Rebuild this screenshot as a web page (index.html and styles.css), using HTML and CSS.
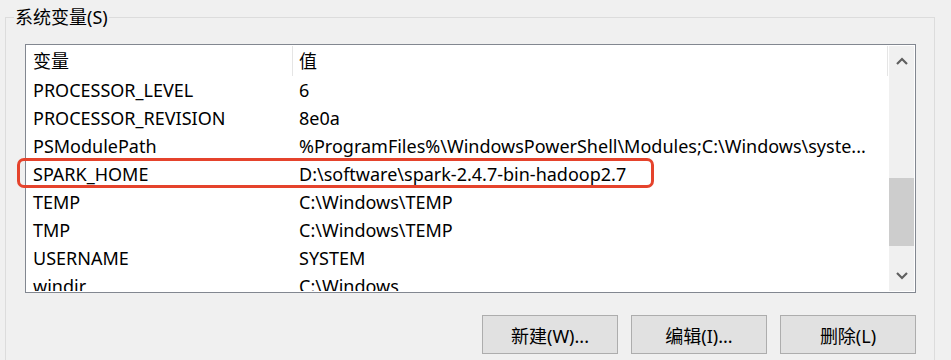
FILE: index.html
```html
<!DOCTYPE html>
<html lang="zh-CN">
<head>
  <meta charset="UTF-8">
  <title>系统变量</title>
  <link rel="stylesheet" href="styles.css">
</head>
<body>

  <div class="group">
    <div class="group-title">系统变量(S)</div>

    <div class="listbox">
      <div class="list-data">
        <div class="list-head">
          <div class="cell name">变量</div>
          <div class="cell value">值</div>
        </div>
        <div class="rows">
          <div class="row"><div class="cell name">PROCESSOR_LEVEL</div><div class="cell value">6</div></div>
          <div class="row"><div class="cell name">PROCESSOR_REVISION</div><div class="cell value">8e0a</div></div>
          <div class="row"><div class="cell name">PSModulePath</div><div class="cell value">%ProgramFiles%\WindowsPowerShell\Modules;C:\Windows\syste...</div></div>
          <div class="row"><div class="cell name">SPARK_HOME</div><div class="cell value">D:\software\spark-2.4.7-bin-hadoop2.7</div></div>
          <div class="row"><div class="cell name">TEMP</div><div class="cell value">C:\Windows\TEMP</div></div>
          <div class="row"><div class="cell name">TMP</div><div class="cell value">C:\Windows\TEMP</div></div>
          <div class="row"><div class="cell name">USERNAME</div><div class="cell value">SYSTEM</div></div>
          <div class="row"><div class="cell name">windir</div><div class="cell value">C:\Windows</div></div>
        </div>
      </div>

      <div class="scrollbar">
        <div class="sb-btn">
          <svg width="12" height="8" viewBox="0 0 12 8"><polyline points="1,7 6,2 11,7" fill="none" stroke="#606060" stroke-width="2.2"/></svg>
        </div>
        <div class="sb-track"><div class="sb-thumb"></div></div>
        <div class="sb-btn">
          <svg width="12" height="8" viewBox="0 0 12 8"><polyline points="1,1 6,6 11,1" fill="none" stroke="#606060" stroke-width="2.2"/></svg>
        </div>
      </div>
    </div>

    <!-- annotation drawn over the screenshot -->
    <div class="highlight"></div>

    <div class="buttons">
      <button class="btn">新建(W)...</button>
      <button class="btn">编辑(I)...</button>
      <button class="btn">删除(L)</button>
    </div>
  </div>

</body>
</html>
```

FILE: styles.css
```css
:root {
  --bg: #f0f0f0;
  --group-line: #dcdcdc;
  --list-border: #828790;
  --sep: #e5e5e5;
  --arrow: #606060;
  --thumb: #cdcdcd;
  --mark: #e5432c;
}

body {
  margin: 0;
  background: var(--bg);
  font-family: "Noto Sans", "Noto Sans CJK SC", sans-serif;
  font-size: 18px;
  color: #000;
  height: 360px;
  overflow: hidden;
}

.group {
  position: relative;
  box-sizing: border-box;
  margin: 17px 0 0 5px;
  width: 930px;
  height: 343px;
  border: 1px solid var(--group-line);
  border-bottom: none;
  padding: 26px 18px 0 19px;
}

.group-title {
  position: absolute;
  left: 8px;
  top: -12px;
  padding: 0 1px;
  line-height: 22px;
  background: var(--bg);
}

.listbox {
  display: flex;
  box-sizing: border-box;
  height: 249px;
  border: 1px solid var(--list-border);
  padding: 1px;
  background: #fff;
}

.list-data {
  flex: 1;
  overflow: hidden;
}

.list-head,
.row {
  display: grid;
  grid-template-columns: 266px 1fr;
  white-space: nowrap;
}

.list-head {
  height: 30px;
  line-height: 31px;
  border-right: 1px solid var(--sep);
}

.list-head .name { border-right: 1px solid var(--sep); }

.row {
  height: 28px;
  line-height: 28px;
}

.cell {
  padding-left: 6px;
  overflow: hidden;
}

.scrollbar {
  width: 25px;
  margin-left: 1px;
  background: var(--bg);
  display: flex;
  flex-direction: column;
}

.sb-btn {
  height: 30px;
  display: flex;
  align-items: center;
  justify-content: center;
}

.sb-track { flex: 1; }

.sb-thumb {
  margin-top: 102px;
  height: 68px;
  background: var(--thumb);
}

.highlight {
  position: absolute;
  left: 11px;
  top: 140px;
  width: 637px;
  height: 30px;
  box-sizing: border-box;
  border: 3px solid var(--mark);
  border-radius: 7px;
}

.buttons {
  display: flex;
  justify-content: flex-end;
  gap: 13px;
  margin-top: 22px;
}

.btn {
  width: 136px;
  height: 39px;
  background: #e1e1e1;
  border: 1px solid #adadad;
  border-radius: 0;
  font-family: inherit;
  font-size: 18px;
  color: #000;
  padding: 0;
}
```
